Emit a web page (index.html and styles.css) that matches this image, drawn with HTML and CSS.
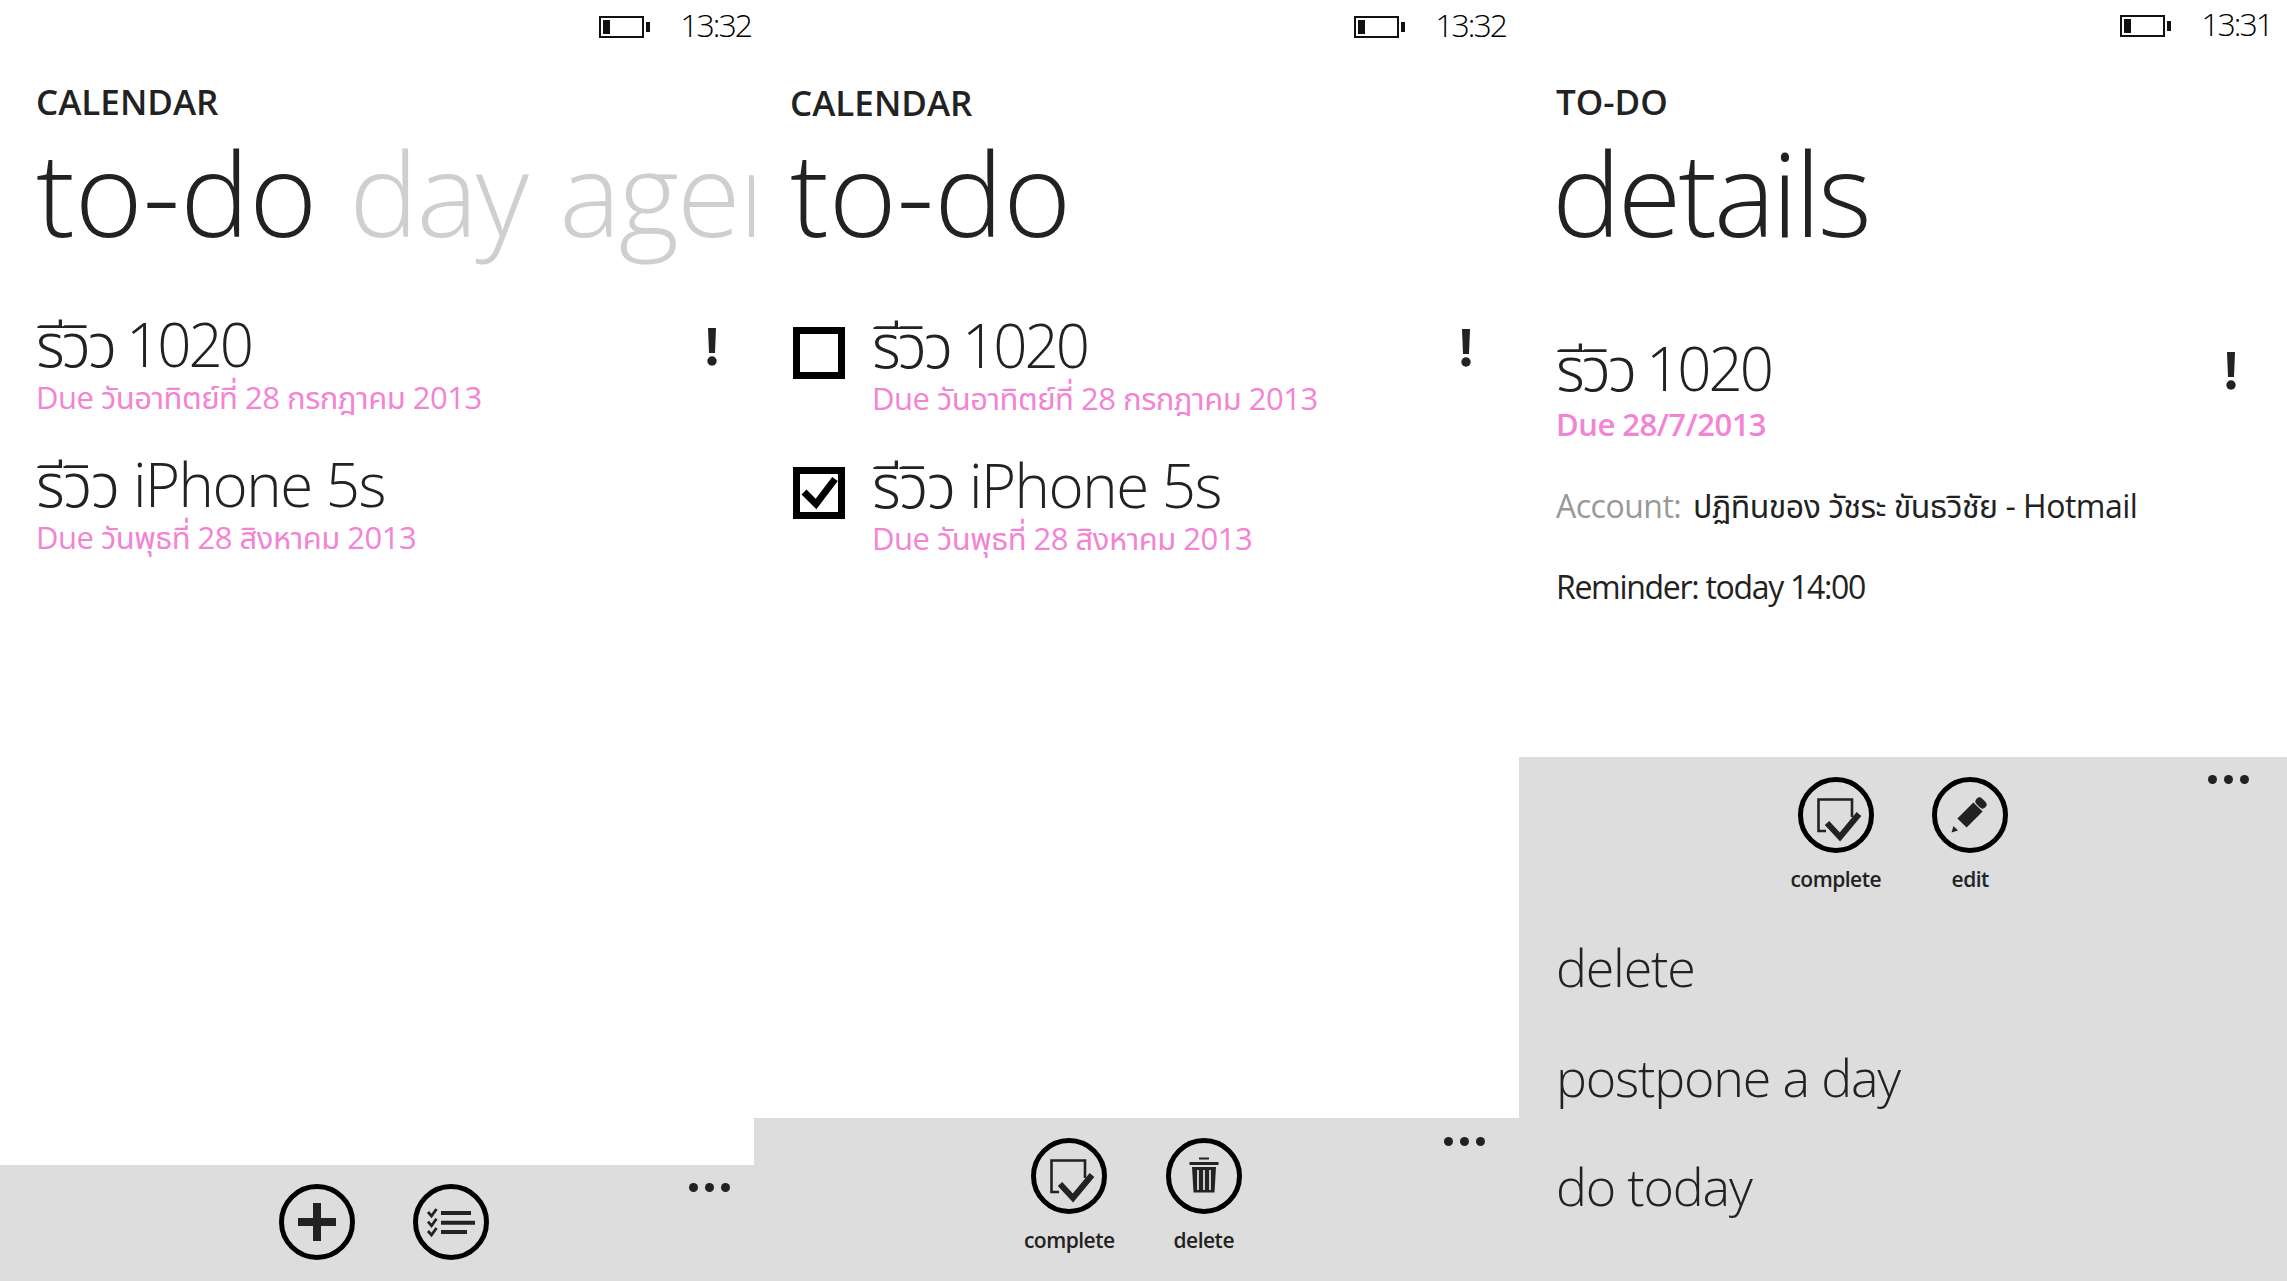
FILE: index.html
```html
<!DOCTYPE html>
<html lang="en">
<head>
    <meta charset="UTF-8">
    <meta name="viewport" content="width=device-width, initial-scale=1.0">
    <title>Calendar to-do</title>
    <link rel="stylesheet" href="styles.css">
</head>
<body>
    <svg class="defs" width="0" height="0">
        <symbol id="battery" viewBox="0 0 52 22">
            <rect x="1" y="1" width="43" height="20" fill="none" stroke="#111" stroke-width="2"/>
            <rect x="4" y="4" width="7" height="14" fill="#111"/>
            <rect x="47" y="6" width="4" height="10" fill="#111"/>
        </symbol>
        <symbol id="flag" viewBox="0 0 10 38">
            <path d="M1 0h8l-1 25H2z" fill="#222"/>
            <circle cx="5" cy="33" r="4.7" fill="#222"/>
        </symbol>
        <symbol id="icon-add" viewBox="0 0 76 76">
            <circle cx="38" cy="38" r="35.5" fill="none" stroke="#000" stroke-width="5"/>
            <path d="M34 19h8v15h15v8H42v15h-8V42H19v-8h15z" fill="#222"/>
        </symbol>
        <symbol id="icon-list" viewBox="0 0 76 76">
            <circle cx="38" cy="38" r="35.5" fill="none" stroke="#000" stroke-width="5"/>
            <path d="M28 29h30M28 38.7h34M28 48h26" stroke="#222" stroke-width="4" fill="none"/>
            <path d="M15 28l3.500 4 5-7M15 37.700l3.500 4 5-7M15 47l3.500 4 5-7" stroke="#222" stroke-width="2.800" fill="none"/>
        </symbol>
        <symbol id="icon-complete" viewBox="0 0 76 76">
            <circle cx="38" cy="38" r="35.5" fill="none" stroke="#000" stroke-width="5"/>
            <path d="M54 40V22.500H20.500V54H28" stroke="#222" stroke-width="2.600" fill="none"/>
            <path d="M29 46l13 14 19-23" stroke="#222" stroke-width="6" fill="none"/>
        </symbol>
        <symbol id="icon-delete" viewBox="0 0 76 76">
            <circle cx="38" cy="38" r="35.5" fill="none" stroke="#000" stroke-width="5"/>
            <path d="M33 19.500h10v2H33zM23.500 24h29v3h-29zM26 29h24l-1.500 25.500H27.500z" fill="#222"/>
            <path d="M32 32v20M38 32v20M44 32v20" stroke="#ddd" stroke-width="1.800"/>
        </symbol>
        <symbol id="icon-edit" viewBox="0 0 76 76">
            <circle cx="38" cy="38" r="35.5" fill="none" stroke="#000" stroke-width="5"/>
            <path d="M19.500 55.500l2-6.500 4.500 4.500z" fill="#222"/>
            <path d="M30 46l16-16" stroke="#222" stroke-width="13" fill="none"/>
            <path d="M47.500 24.500l3 3" stroke="#222" stroke-width="8" stroke-linecap="round" fill="none"/>
        </symbol>
    </svg>

    <div class="screens">
        <div class="panel panel-first">
            <div class="status">
                <svg class="battery"><use href="#battery"/></svg>
                <span class="clock">13:32</span>
            </div>
            <div class="app-name">CALENDAR</div>
            <div class="pivot">to-do <span class="pivot-off">day</span> <span class="pivot-off">agenda</span></div>
            <div class="todo-list">
                <div class="todo">
                    <div class="todo-text">
                        <div class="todo-title title-digits">รีวิว 1020</div>
                        <div class="todo-due">Due วันอาทิตย์ที่ 28 กรกฎาคม 2013</div>
                    </div>
                    <svg class="flag"><use href="#flag"/></svg>
                </div>
                <div class="todo">
                    <div class="todo-text">
                        <div class="todo-title">รีวิว iPhone 5s</div>
                        <div class="todo-due">Due วันพุธที่ 28 สิงหาคม 2013</div>
                    </div>
                </div>
            </div>
            <div class="app-bar bar-short">
                <div class="bar-button"><svg class="round-icon"><use href="#icon-add"/></svg></div>
                <div class="bar-button"><svg class="round-icon"><use href="#icon-list"/></svg></div>
                <div class="more"><i></i><i></i><i></i></div>
            </div>
        </div>

        <div class="panel panel-second">
            <div class="status">
                <svg class="battery"><use href="#battery"/></svg>
                <span class="clock">13:32</span>
            </div>
            <div class="app-name">CALENDAR</div>
            <div class="pivot">to-do</div>
            <div class="todo-list">
                <div class="todo">
                    <div class="check"></div>
                    <div class="todo-text">
                        <div class="todo-title title-digits">รีวิว 1020</div>
                        <div class="todo-due">Due วันอาทิตย์ที่ 28 กรกฎาคม 2013</div>
                    </div>
                    <svg class="flag"><use href="#flag"/></svg>
                </div>
                <div class="todo">
                    <div class="check">
                        <svg viewBox="0 0 38 38"><path d="M4 18l12 12L35 5" fill="none" stroke="#000" stroke-width="7"/></svg>
                    </div>
                    <div class="todo-text">
                        <div class="todo-title">รีวิว iPhone 5s</div>
                        <div class="todo-due">Due วันพุธที่ 28 สิงหาคม 2013</div>
                    </div>
                </div>
            </div>
            <div class="app-bar">
                <div class="bar-button"><svg class="round-icon"><use href="#icon-complete"/></svg><span>complete</span></div>
                <div class="bar-button"><svg class="round-icon"><use href="#icon-delete"/></svg><span>delete</span></div>
                <div class="more"><i></i><i></i><i></i></div>
            </div>
        </div>

        <div class="panel panel-third">
            <div class="status">
                <svg class="battery"><use href="#battery"/></svg>
                <span class="clock">13:31</span>
            </div>
            <div class="app-name">TO-DO</div>
            <div class="pivot">details</div>
            <div class="detail">
                <div class="todo">
                    <div class="todo-text">
                        <div class="todo-title title-digits">รีวิว 1020</div>
                        <div class="todo-due due-strong">Due 28/7/2013</div>
                    </div>
                    <svg class="flag"><use href="#flag"/></svg>
                </div>
                <div class="detail-line"><span class="muted">Account:</span> ปฏิทินของ วัชระ ขันธวิชัย - Hotmail</div>
                <div class="detail-line reminder">Reminder: today 14:00</div>
            </div>
            <div class="app-bar bar-open">
                <div class="bar-row">
                    <div class="bar-button"><svg class="round-icon"><use href="#icon-complete"/></svg><span>complete</span></div>
                    <div class="bar-button"><svg class="round-icon"><use href="#icon-edit"/></svg><span>edit</span></div>
                </div>
                <div class="more"><i></i><i></i><i></i></div>
                <ul class="bar-menu">
                    <li>delete</li>
                    <li>postpone a day</li>
                    <li>do today</li>
                </ul>
            </div>
        </div>
    </div>
</body>
</html>
```

FILE: styles.css
```css
* {
    margin: 0;
    padding: 0;
    box-sizing: border-box;
}

html, body {
    height: 100%;
    overflow: hidden;
}

body {
    font-family: 'Open Sans', 'Noto Sans', 'Noto Sans Thai', 'Noto Sans CJK SC', sans-serif;
    background-color: #fff;
    color: #222;
}

.defs {
    display: block;
    height: 0;
}

.screens {
    display: flex;
    height: 1281px;
}

.panel {
    display: flex;
    flex-direction: column;
    height: 100%;
    overflow: hidden;
    padding-left: 36px;
}

.panel-first {
    width: 754px;
}

.panel-second {
    width: 765px;
}

.panel-third {
    width: 768px;
    padding-left: 37px;
}

.status {
    display: flex;
    justify-content: flex-end;
    align-items: center;
    height: 50px;
    gap: 29px;
    padding-right: 3px;
}

.panel-second .status {
    padding-right: 13px;
}

.panel-third .status {
    padding-right: 15px;
    padding-bottom: 2px;
}

.battery {
    width: 52px;
    height: 22px;
    margin-top: 4px;
}

.clock {
    font-size: 32px;
    font-weight: 300;
    line-height: 50px;
    letter-spacing: -2px;
    color: #000;
}

.app-name {
    margin-top: 29px;
    font-size: 35px;
    font-weight: 600;
    line-height: 46px;
}

.panel-second .app-name {
    margin-top: 30px;
    margin-bottom: -1px;
}

.pivot {
    margin-top: 2px;
    font-size: 116px;
    font-weight: 300;
    line-height: 130px;
    white-space: nowrap;
}

.panel-third .pivot {
    margin-left: -4px;
    letter-spacing: -3.3px;
}

.pivot-off {
    color: #cfcfcf;
    margin-left: 2px;
    letter-spacing: -2px;
}

.todo-list {
    margin-top: 54px;
    flex: 1;
    display: flex;
    flex-direction: column;
    gap: 34px;
}

.panel-second .todo-list {
    margin-top: 55px;
}

.todo {
    display: flex;
    align-items: flex-start;
}

.todo-text {
    flex: 1;
}

.todo-title {
    font-size: 60px;
    font-weight: 300;
    line-height: 66px;
    letter-spacing: -1.5px;
}

.title-digits {
    letter-spacing: -3px;
    word-spacing: -1px;
}

.todo-due {
    font-size: 31px;
    font-weight: 400;
    line-height: 40px;
    letter-spacing: -0.5px;
    color: #f383d3;
}

.due-strong {
    margin-top: 3px;
    font-weight: 600;
}

.flag {
    width: 10px;
    height: 38px;
    margin: 17px 37px 0 0;
}

.panel-second .flag {
    margin-right: 48px;
}

.panel-third .flag {
    margin-right: 51px;
}

.check {
    width: 52px;
    height: 52px;
    margin: 15px 27px 0 3px;
    border: 7px solid #000;
}

.check svg {
    display: block;
    width: 100%;
    height: 100%;
}

.detail {
    flex: 1;
    margin-top: 78px;
}

.detail-line {
    font-size: 32px;
    font-weight: 400;
    line-height: 44px;
    margin-top: 37px;
    letter-spacing: -0.5px;
}

.todo + .detail-line {
    margin-top: 40px;
}

.reminder {
    letter-spacing: -1.3px;
}

.muted {
    margin-right: 4px;
    color: #999;
}

.app-bar {
    position: relative;
    display: flex;
    justify-content: center;
    align-items: flex-start;
    height: 163px;
    margin-left: -36px;
    padding-top: 20px;
    background-color: #ddd;
}

.bar-short {
    height: 116px;
    padding: 19px 0 0 14px;
}

.bar-open {
    display: block;
    height: 524px;
    margin-left: -37px;
    padding: 20px 0 0 37px;
}

.bar-row {
    display: flex;
    justify-content: center;
    margin-left: -37px;
}

.bar-button {
    display: flex;
    flex-direction: column;
    align-items: center;
    width: 134.5px;
}

.round-icon {
    width: 76px;
    height: 76px;
}

.bar-button span {
    font-size: 21px;
    font-weight: 600;
    line-height: 30px;
    margin-top: 11px;
    letter-spacing: -0.5px;
}

.more {
    position: absolute;
    top: 18px;
    right: 24px;
    display: flex;
    gap: 7px;
}

.panel-second .more {
    top: 19px;
    right: 34px;
}

.panel-third .more {
    right: 38px;
}

.more i {
    display: block;
    width: 9px;
    height: 9px;
    border-radius: 50%;
    background-color: #222;
}

.bar-menu {
    list-style: none;
    margin-top: 18px;
}

.bar-menu li {
    font-size: 52px;
    font-weight: 300;
    line-height: 109.5px;
    letter-spacing: -1.2px;
}
```
